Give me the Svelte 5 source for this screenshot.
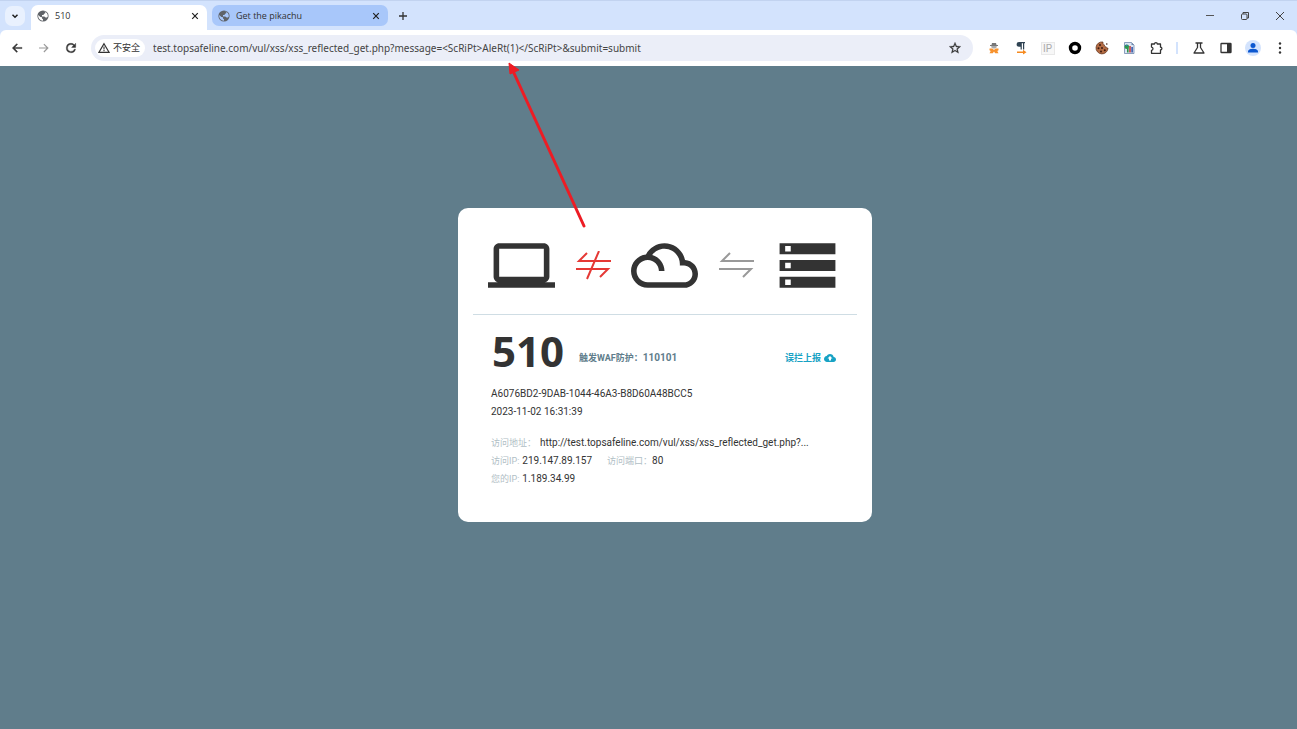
<script>
  let address = $state(
    "test.topsafeline.com/vul/xss/xss_reflected_get.php?message=<ScRiPt>AleRt(1)</ScRiPt>&submit=submit"
  );

  const tabs = [
    { title: "510", active: true },
    { title: "Get the pikachu", active: false },
  ];

  const block = {
    status: "510",
    rule: "110101",
    id: "A6076BD2-9DAB-1044-46A3-B8D60A48BCC5",
    time: "2023-11-02 16:31:39",
    url: "http://test.topsafeline.com/vul/xss/xss_reflected_get.php?...",
    host: "219.147.89.157",
    port: "80",
    client: "1.189.34.99",
  };
</script>

<div class="window">
  <header class="tabstrip">
    <button class="tab-search" aria-label="Search tabs">
      <svg width="8" height="8" viewBox="0 0 8 8"><path d="M1.5 2.7 4 5.2 6.5 2.7" fill="none" stroke="#1f1f1f" stroke-width="1.5" /></svg>
    </button>
    {#each tabs as tab}
      <div class="tab" class:active={tab.active}>
        <svg class="globe" width="12" height="12" viewBox="0 0 12 12">
          <circle cx="6" cy="6" r="5.6" fill="#5f6368" />
          <path d="M1.2 5.1 3.4 7l1.6.2v1.3l1 .8v1.4A4.800 4.800 0 0 1 1.200 5.100zM6.400 1.300l1.800.7.2 1-1.500.9-.4 1.200H5v1.300h2.300l1.300 1.100 1.300-.1.9-.8a4.700 4.700 0 0 0-4.400-5.300z" fill={tab.active ? "#fff" : "#a8c7fa"} />
        </svg>
        <span class="title">{tab.title}</span>
        <button class="close" aria-label="Close tab">
          <svg width="8" height="8" viewBox="0 0 8 8"><path d="M1.2 1.2l5.6 5.6M6.8 1.2 1.2 6.8" stroke="#1f1f1f" stroke-width="1.2" /></svg>
        </button>
      </div>
    {/each}
    <button class="new-tab" aria-label="New tab">
      <svg width="10" height="10" viewBox="0 0 10 10"><path d="M5 1v8M1 5h8" stroke="#333" stroke-width="1.3" /></svg>
    </button>
    <div class="controls">
      <button aria-label="Minimize">
        <svg width="10" height="10" viewBox="0 0 10 10"><path d="M1 4.5h8" stroke="#555" stroke-width="1" /></svg>
      </button>
      <button aria-label="Restore">
        <svg width="10" height="10" viewBox="0 0 10 10" fill="none" stroke="#444"><rect x="1.5" y="3" width="5.5" height="5.5" rx="1" /><path d="M3 3V1.5h5.5V7H7" /></svg>
      </button>
      <button aria-label="Close">
        <svg width="10" height="10" viewBox="0 0 10 10"><path d="M1 1l8 8M9 1 1 9" stroke="#444" stroke-width="1" /></svg>
      </button>
    </div>
  </header>

  <nav class="toolbar">
    <button class="nav" aria-label="Back">
      <svg width="14" height="14" viewBox="0 0 24 24"><path d="M20.500 11H7.830l5.090-5.090L11.500 4.500 4 12l7.500 7.500 1.410-1.410L7.830 13H20.500z" fill="#333" stroke="#333" stroke-width=".8" /></svg>
    </button>
    <button class="nav" aria-label="Forward">
      <svg width="14" height="14" viewBox="0 0 24 24"><path d="M3.500 11h12.670l-5.090-5.090L12.500 4.500 20 12l-7.500 7.500-1.410-1.410L16.170 13H3.500z" fill="#9a9a9a" /></svg>
    </button>
    <button class="nav" aria-label="Reload">
      <svg width="14" height="14" viewBox="0 0 24 24"><path d="M17.650 6.350A7.960 7.960 0 0 0 12 4a8 8 0 1 0 7.730 10h-2.080A6 6 0 1 1 12 6c1.660 0 3.140.69 4.220 1.780L13 11h7V4z" fill="#333" stroke="#333" stroke-width=".7" /></svg>
    </button>
    <div class="omnibox">
      <button class="security">
        <svg width="12" height="12" viewBox="0 0 12 12"><path d="M6 1.700 11 10.300H1z" fill="none" stroke="#333" stroke-width="1.200" /><path d="M6 4.600v2.800M6 8v1.300" stroke="#333" stroke-width="1.100" /></svg>
        不安全
      </button>
      <input type="text" aria-label="Address" bind:value={address} spellcheck="false" />
      <button class="star" aria-label="Bookmark this tab">
        <svg width="14" height="14" viewBox="0 0 24 24"><path d="M22 9.240l-7.190-.62L12 2 9.190 8.630 2 9.240l5.460 4.730L5.820 21 12 17.270 18.180 21l-1.630-7.030zM12 15.400l-3.760 2.270 1-4.280-3.320-2.880 4.380-.38L12 6.100l1.710 4.040 4.380.38-3.320 2.880 1 4.280z" fill="#333" stroke="#333" stroke-width=".5" /></svg>
      </button>
    </div>
    <div class="extensions">
      <button aria-label="Incognito helper">
        <svg width="14" height="14" viewBox="0 0 14 14">
          <path d="M5 2h4l.5 2h1.500v1H3V4h1.500z" fill="#777" />
          <path d="M4.300 5h5.400v1.400L7 7.800 4.300 6.400z" fill="#aaa" />
          <path d="M2.500 7.400h3L7 9l1.500-1.600h3v1.800l-1.200.8 1.200 2.300H8.200L7 10.500l-1.200 1.800H2.500L3.700 10l-1.200-.8z" fill="#f7922d" />
        </svg>
      </button>
      <button aria-label="Paragraph direction">
        <svg width="14" height="14" viewBox="0 0 14 14">
          <path d="M5 1h6v1.200h-.8V8.500H9V2.200H7.800v6.300H6.600V5.800H5A2.400 2.400 0 0 1 5 1z" fill="#2f4353" />
          <path d="M3 10.500h6V8.800l3.500 2.400L9 13.500v-1.600H3z" fill="#f58a1f" />
        </svg>
      </button>
      <button aria-label="IP lookup"><span class="ip">IP</span></button>
      <button aria-label="Recorder">
        <svg width="14" height="14" viewBox="0 0 14 14"><circle cx="7" cy="7" r="4.500" fill="none" stroke="#000" stroke-width="3.400" /></svg>
      </button>
      <button aria-label="Cookies">
        <svg width="14" height="14" viewBox="0 0 14 14">
          <path d="M8 1a6 6 0 1 0 5 6c-1 .2-1.800-.4-1.900-1.200C10 6 9.200 5.100 9.500 4 8.300 3.700 7.600 2.300 8 1z" fill="#b36b43" stroke="#5b2c16" stroke-width=".7" />
          <g fill="#3d1b10"><circle cx="5" cy="4" r="1" /><circle cx="3.500" cy="7.300" r="1" /><circle cx="7" cy="7" r="1" /><circle cx="6" cy="10.500" r="1" /><circle cx="9.800" cy="9.200" r="1" /><circle cx="11.800" cy="3" r=".8" /></g>
        </svg>
      </button>
      <button aria-label="Page report">
        <svg width="14" height="14" viewBox="0 0 14 14">
          <path d="M2.500 1.500h7l2.500 2.500v8.500H2.500z" fill="#dbe6f5" stroke="#7188ac" stroke-width=".8" />
          <path d="M9.500 1.500V4H12z" fill="#7188ac" />
          <circle cx="4.800" cy="5.800" r="2.300" fill="#2b9a4a" /><path d="M3.500 4.500 5 3.500l.8 2z" fill="#3a6dd0" />
          <path d="M5 7h1.600v4.500H5z" fill="#2e9147" /><path d="M7.200 5h1.600v6.500H7.200z" fill="#c73d3d" /><path d="M9.300 6h1.600v5.500H9.300z" fill="#3658a8" />
        </svg>
      </button>
      <button aria-label="Extensions">
        <svg width="14" height="14" viewBox="0 0 14 14"><path d="M2.500 3h3a1.400 1.400 0 0 1 2.800 0h3.200v3.200a1.400 1.400 0 0 1 0 2.800v3.300h-9V9.300c2-.2 2-3 0-3.200z" fill="none" stroke="#333" stroke-width="1.300" stroke-linejoin="round" /></svg>
      </button>
    </div>
    <span class="divider"></span>
    <div class="extensions">
      <button aria-label="Labs">
        <svg width="14" height="14" viewBox="0 0 14 14"><path d="M3.500 2h7M5.500 2v4.500L2 12h10L8.500 6.500V2" fill="none" stroke="#333" stroke-width="1.300" stroke-linejoin="round" /></svg>
      </button>
      <button aria-label="Side panel">
        <svg width="14" height="14" viewBox="0 0 14 14"><rect x="2" y="2.500" width="10" height="9" rx=".6" fill="none" stroke="#333" stroke-width="1.300" /><path d="M8 2.500h4v9H8z" fill="#333" /></svg>
      </button>
      <button aria-label="Profile">
        <svg width="16" height="16" viewBox="0 0 16 16"><circle cx="8" cy="8" r="8" fill="#d3e3fd" /><circle cx="8" cy="5.600" r="2.500" fill="#0b57d0" /><path d="M3 12.500v-1.200c0-1.700 3.300-2.500 5-2.500s5 .8 5 2.500v1.200z" fill="#0b57d0" /></svg>
      </button>
      <button aria-label="Menu">
        <svg width="14" height="14" viewBox="0 0 14 14" fill="#333"><circle cx="7" cy="2.500" r="1.200" /><circle cx="7" cy="7" r="1.200" /><circle cx="7" cy="11.500" r="1.200" /></svg>
      </button>
    </div>
  </nav>

  <main>
    <section class="card">
      <div class="route">
        <svg width="67" height="67" viewBox="0 0 24 24" fill="#333"><path d="M20 18c1.100 0 2-.9 2-2V6c0-1.100-.9-2-2-2H4c-1.100 0-2 .9-2 2v10c0 1.100.9 2 2 2H0v2h24v-2h-4zM4 6h16v10H4V6z" /></svg>
        <svg width="35" height="30" viewBox="0 0 35 30" fill="none" stroke="#e53935" stroke-width="2"><path d="M35 10H3l8-8M0 18h32l-8 8M23 0 11 28" /></svg>
        <svg width="67" height="67" viewBox="0 0 24 24" fill="#333"><path d="M19.350 10.040C18.670 6.590 15.640 4 12 4 9.110 4 6.610 5.640 5.360 8.040 2.350 8.360 0 10.900 0 14c0 3.310 2.690 6 6 6h13c2.760 0 5-2.240 5-5 0-2.640-2.050-4.780-4.650-4.960zM19 18H6c-2.210 0-4-1.790-4-4s1.790-4 4-4 4 1.790 4 4h2c0-2.760-1.860-5.080-4.400-5.780C8.610 6.880 10.200 6 12 6c3.030 0 5.500 2.470 5.500 5.500v.5H19c1.650 0 3 1.350 3 3s-1.350 3-3 3z" /></svg>
        <svg width="35" height="30" viewBox="0 0 35 30" fill="none" stroke="#999" stroke-width="2"><path d="M35 10H3l8-8M0 18h32l-8 8" /></svg>
        <svg width="67" height="67" viewBox="0 0 24 24" fill="#333"><path d="M2 20h20v-4H2v4zm2-3h2v2H4v-2zM2 4v4h20V4H2zm4 3H4V5h2v2zm-4 7h20v-4H2v4zm2-3h2v2H4v-2z" /></svg>
      </div>
      <div class="info">
        <div class="headline">
          <h1>{block.status}</h1>
          <strong>触发WAF防护：<span class="rule">{block.rule}</span></strong>
          <a href="#report">
            误拦上报
            <svg width="12" height="12" viewBox="0 0 24 24" fill="currentColor"><path d="M19.350 10.040C18.670 6.590 15.640 4 12 4 9.110 4 6.600 5.640 5.350 8.040 2.340 8.360 0 10.910 0 14c0 3.310 2.690 6 6 6h13c2.760 0 5-2.240 5-5 0-2.640-2.050-4.780-4.650-4.960zM14 13v4h-4v-4H7l5-5 5 5h-3z" /></svg>
          </a>
        </div>
        <p>{block.id}</p>
        <p>{block.time}</p>
        <div class="details">
          <p><span class="label wide">访问地址：</span><span>{block.url}</span></p>
          <p>
            <span class="label">访问IP:</span><span>{block.host}</span>
            <span class="label port">访问端口：</span><span>{block.port}</span>
          </p>
          <p><span class="label">您的IP:</span><span>{block.client}</span></p>
        </div>
      </div>
    </section>
  </main>

  <svg class="pointer" width="80" height="170" viewBox="0 0 80 170">
    <path d="M76 164 5 9" stroke="#ed1c24" stroke-width="3" stroke-linecap="round" />
    <path d="M1 1 11 8 2 12z" fill="#ed1c24" stroke="#ed1c24" stroke-linejoin="round" />
  </svg>
</div>

<style>
  :global(body) {
    margin: 0;
  }

  .window {
    position: relative;
    display: flex;
    flex-direction: column;
    min-height: 100vh;
    background: #607d8b;
    color: #333;
    font: 10px/18px Roboto, "Noto Sans CJK SC", sans-serif;
  }

  button {
    display: flex;
    align-items: center;
    justify-content: center;
    padding: 0;
    border: none;
    background: none;
    font: inherit;
    color: inherit;
  }

  svg {
    display: block;
    flex: none;
  }

  .tabstrip {
    display: flex;
    align-items: center;
    height: 30px;
    padding-left: 5px;
    box-sizing: border-box;
    border-top: 1px solid #c2d3f0;
    background: #d3e3fd;
  }

  .tab-search {
    width: 20px;
    height: 20px;
    margin-right: 6px;
    border-radius: 7px;
    background: #e9f1fe;
  }

  .tab {
    display: flex;
    align-items: center;
    box-sizing: border-box;
    width: 176px;
    height: 21px;
    margin-right: 5px;
    padding: 0 8px 0 6px;
    border-radius: 7px;
    background: #a8c7fa;
  }

  .tab.active {
    align-self: flex-end;
    height: 25px;
    padding-bottom: 4px;
    border-radius: 7px 7px 0 0;
    background: #fff;
  }

  .title {
    flex: 1;
    margin-left: 6px;
    font-family: "Open Sans", "Noto Sans CJK SC", sans-serif;
    font-size: 9px;
  }

  .new-tab {
    width: 20px;
    height: 20px;
  }

  .controls {
    display: flex;
    margin-left: auto;
  }

  .controls button {
    width: 35px;
    height: 28px;
  }

  .toolbar {
    display: flex;
    align-items: center;
    height: 36px;
    padding: 0 4px 0 3px;
    box-sizing: border-box;
    border-radius: 6px 6px 0 0;
    background: #fff;
    box-shadow: 0 -6px 0 #d3e3fd;
  }

  .tabstrip {
    position: relative;
  }

  .nav {
    width: 27px;
    height: 26px;
  }

  .omnibox {
    display: flex;
    flex: 1;
    align-items: center;
    height: 26px;
    margin-left: 7px;
    padding: 0 11px 0 4px;
    box-sizing: border-box;
    border-radius: 13px;
    background: #ebeef8;
  }

  .security {
    gap: 3px;
    height: 18px;
    padding: 0 5px 0 3px;
    border-radius: 9px;
    background: #fff;
    font-size: 9px;
  }

  input {
    flex: 1;
    min-width: 0;
    margin-left: 8px;
    padding: 0;
    border: none;
    outline: none;
    background: none;
    font: 10px/18px "Noto Sans", "Noto Sans CJK SC", sans-serif;
    color: #444;
  }

  .extensions {
    display: flex;
    margin-left: 7px;
  }

  .extensions button {
    width: 27px;
    height: 26px;
  }

  .ip {
    width: 12px;
    border: 1px solid #e8e8e8;
    background: #f7f7f7;
    line-height: 11px;
    color: #aaa;
  }

  .divider {
    width: 2px;
    height: 12px;
    margin-left: 7px;
    background: #d3e3fd;
  }

  main {
    display: flex;
    flex: 1;
    align-items: flex-start;
    justify-content: center;
    padding: 142px 0 0 33px;
  }

  .card {
    width: 414px;
    padding: 0 15px 34px;
    box-sizing: border-box;
    border-radius: 10px;
    background: #fff;
  }

  .route {
    display: flex;
    align-items: center;
    justify-content: space-between;
    padding: 24px 16px 15px 15px;
    border-bottom: 1px solid #cfdde4;
  }

  .info {
    padding: 16px 21px 0 18px;
  }

  .headline {
    display: flex;
    align-items: flex-end;
    margin-bottom: 14px;
    color: #607d8b;
  }

  h1 {
    margin: 0 15px 0 1px;
    font: 700 42px/40px "Open Sans", sans-serif;
    color: #333;
  }

  strong,
  a {
    padding-bottom: 4px;
    font-size: 9px;
    font-weight: 700;
  }

  .rule {
    font-size: 10px;
  }

  a {
    display: flex;
    align-items: center;
    gap: 3px;
    margin-left: auto;
    color: #17a2c4;
    text-decoration: none;
  }

  p {
    display: flex;
    align-items: center;
    margin: 0;
  }

  .details {
    margin-top: 13px;
  }

  .label {
    margin-right: 3px;
    color: #b0bec5;
    font-size: 9px;
  }

  .wide {
    margin-right: 4px;
  }

  .port {
    margin: 0 0 0 15px;
  }

  .pointer {
    position: absolute;
    top: 62px;
    left: 508px;
  }
</style>
